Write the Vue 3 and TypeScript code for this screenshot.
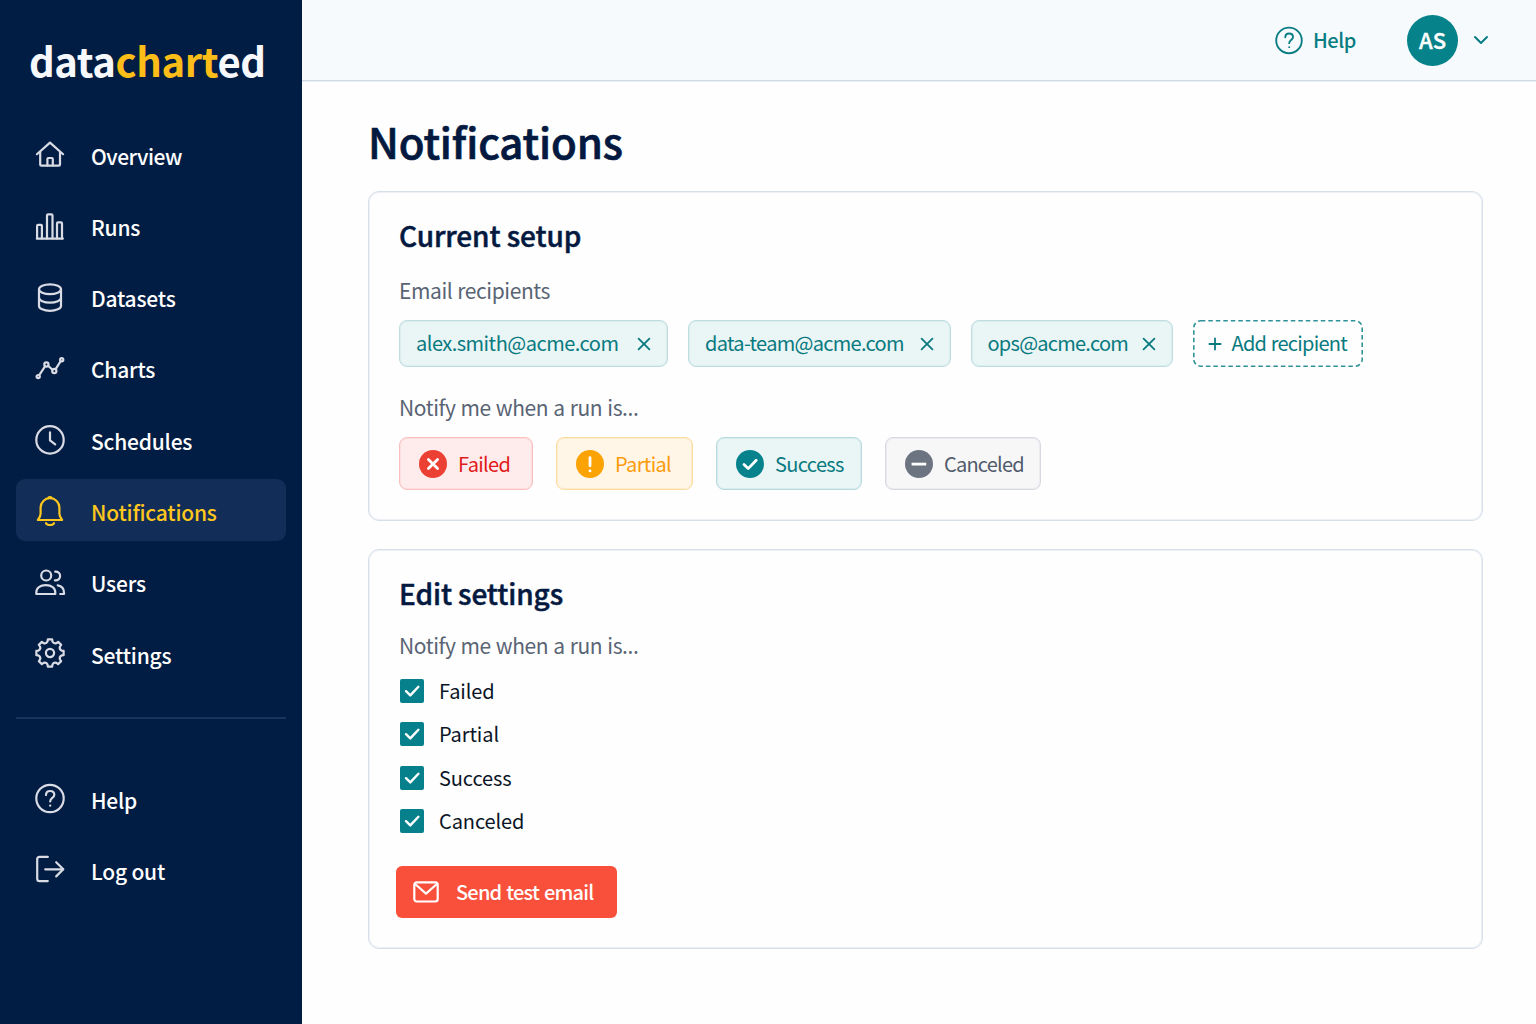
<script setup lang="ts">
type Status = 'failed' | 'partial' | 'success' | 'canceled'

interface NavItem {
  id: string
  label: string
}

const gearPath = (() => {
  const c = 15
  const points: string[] = []
  const at = (r: number, deg: number) => {
    const a = ((deg - 90) * Math.PI) / 180
    return `${(c + r * Math.cos(a)).toFixed(2)} ${(c + r * Math.sin(a)).toFixed(2)}`
  }
  for (let i = 0; i < 8; i++) {
    const d = i * 45
    points.push(`${i === 0 ? 'M' : 'L'}${at(13.8, d - 9)}`)
    points.push(`L${at(13.8, d + 9)}`)
    points.push(`L${at(11.8, d + 12)}`)
    points.push(`Q${at(9.8, d + 22.5)} ${at(11.8, d + 33)}`)
  }
  return points.join(' ') + ' Z'
})()

const questionPath =
  'M11 12.1 C11 9.5 12.8 8 15.1 8 C17.5 8 19.3 9.5 19.3 11.7 C19.3 14.9 15.2 15 15.2 18.4'

const icons: Record<string, string[]> = {
  overview: ['M1.9 15.2 L15 3.6 L28.1 15.2', 'M5.2 13 V25.6 Q5.2 26.7 6.3 26.7 H23.9 Q25 26.7 25 25.6 V13', 'M12.4 26.5 V20 Q12.4 19 13.4 19 H16.8 Q17.8 19 17.8 20 V26.5'],
  runs: ['M1.8 28.6 H27.9', 'M2.1 28.5 V15.8 Q2.1 14.8 3.1 14.8 H5.9 Q6.9 14.8 6.9 15.8 V28.5', 'M12 28.5 V5.6 Q12 4.4 13.2 4.4 H16.3 Q17.5 4.4 17.5 5.6 V28.5', 'M22 28.5 V13.4 Q22 12.4 23 12.4 H26 Q27 12.4 27 13.4 V28.5'],
  datasets: ['M4 7.3 A11 4.9 0 0 1 26 7.3 A11 4.9 0 0 1 4 7.3 Z', 'M4 7.3 V23.9 A11 4.9 0 0 0 26 23.9 V7.3', 'M4 15.8 A11 4.9 0 0 0 26 15.8'],
  charts: ['M4.4 21.8 L10.2 13.2', 'M13.1 12.8 L17.5 16.7', 'M20.5 16.3 L25.5 8.4', 'M1.6 23.6 a1.6 1.6 0 1 0 3.2 0 a1.6 1.6 0 1 0 -3.2 0', 'M9.3 11.5 a2.1 2.1 0 1 0 4.2 0 a2.1 2.1 0 1 0 -4.2 0', 'M17.2 18 a2.1 2.1 0 1 0 4.2 0 a2.1 2.1 0 1 0 -4.2 0', 'M25.1 6.8 a1.6 1.6 0 1 0 3.2 0 a1.6 1.6 0 1 0 -3.2 0'],
  schedules: ['M1.3 15.9 a13.7 13.7 0 1 0 27.4 0 a13.7 13.7 0 1 0 -27.4 0', 'M15 8.4 V16.4 L20.2 20.3'],
  notifications: ['M2.9 25 H27.1 C25.6 23 24.4 21.4 24.4 18.8 V12.6 A9.4 9.4 0 0 0 5.6 12.6 V18.8 C5.6 21.4 4.4 23 2.9 25 Z', 'M13.6 2.6 C14 1.9 16 1.9 16.4 2.6', 'M11 28.2 C12.2 30.6 17.8 30.6 19 28.2'],
  users: ['M6.2 8.5 a5 5 0 1 0 10 0 a5 5 0 1 0 -10 0', 'M1.3 27 V25.8 C1.3 20.8 5.2 18.1 10.8 18.1 C16.4 18.1 20.3 20.8 20.3 25.8 V27 Z', 'M20.2 4.6 C23.2 4.4 25.1 6.3 25.1 9 C25.1 11.8 23 13.7 19.9 13.4', 'M22.7 18.3 C26.6 19 29 21.6 29 25.6 V27 H25.2'],
  settings: [gearPath, 'M10.9 15 a4.1 4.1 0 1 0 8.2 0 a4.1 4.1 0 1 0 -8.2 0'],
  help: ['M1.3 15.5 a13.7 13.7 0 1 0 27.4 0 a13.7 13.7 0 1 0 -27.4 0', questionPath, 'M15.2 22.6 V22.7'],
  logout: ['M12.8 2.9 H4.6 Q2.2 2.9 2.2 5.3 V24.7 Q2.2 27.1 4.6 27.1 H12.8', 'M10.2 15.3 H28', 'M21.2 8.2 L28.3 15.3 L21.2 22.4'],
}

const mainNav: NavItem[] = [
  { id: 'overview', label: 'Overview' },
  { id: 'runs', label: 'Runs' },
  { id: 'datasets', label: 'Datasets' },
  { id: 'charts', label: 'Charts' },
  { id: 'schedules', label: 'Schedules' },
  { id: 'notifications', label: 'Notifications' },
  { id: 'users', label: 'Users' },
  { id: 'settings', label: 'Settings' },
]

const footNav: NavItem[] = [
  { id: 'help', label: 'Help' },
  { id: 'logout', label: 'Log out' },
]

const activeId = 'notifications'

const recipients = [
  { size: 'wide', email: 'alex.smith@acme.com' },
  { size: 'medium', email: 'data-team@acme.com' },
  { size: 'small', email: 'ops@acme.com' },
]

const statuses: { id: Status; label: string; mark: string }[] = [
  { id: 'failed', label: 'Failed', mark: 'M9.4 9.4 L18.6 18.6 M18.6 9.4 L9.4 18.6' },
  { id: 'partial', label: 'Partial', mark: 'M14 7.6 V15.8 M14 20.8 V20.9' },
  { id: 'success', label: 'Success', mark: 'M8 14.4 L12.2 18.6 L20.2 10.2' },
  { id: 'canceled', label: 'Canceled', mark: 'M6.6 14.1 H21.2' },
]
</script>

<template>
  <div class="app">
    <aside class="sidebar">
      <div class="logo">data<span>chart</span>ed</div>
      <nav class="nav">
        <a v-for="item in mainNav" :key="item.id" class="nav-item" :class="[item.id, { active: item.id === activeId }]">
          <svg class="nav-icon" viewBox="0 0 30 30"><path v-for="d in icons[item.id]" :key="d" :d="d" /></svg>
          <span>{{ item.label }}</span>
        </a>
      </nav>
      <div class="divider"></div>
      <nav class="nav">
        <a v-for="item in footNav" :key="item.id" class="nav-item">
          <svg class="nav-icon" viewBox="0 0 30 30"><path v-for="d in icons[item.id]" :key="d" :d="d" /></svg>
          <span>{{ item.label }}</span>
        </a>
      </nav>
    </aside>

    <div class="page">
      <header class="topbar">
        <a class="top-help">
          <svg viewBox="0 0 30 30"><path v-for="d in icons.help" :key="d" :d="d" /></svg>
          <span>Help</span>
        </a>
        <div class="avatar">AS</div>
        <svg class="chevron" viewBox="0 0 16 10"><path d="M2 2 L8 8 L14 2" /></svg>
      </header>

      <main class="content">
        <h1>Notifications</h1>

        <section class="card current">
          <h2>Current setup</h2>
          <p class="label">Email recipients</p>
          <div class="chips">
            <div v-for="r in recipients" :key="r.email" class="chip" :class="r.size">
              <span>{{ r.email }}</span>
              <svg viewBox="0 0 14 14"><path d="M1.6 1.6 L12.4 12.4 M12.4 1.6 L1.6 12.4" /></svg>
            </div>
            <button class="add">
              <svg class="dash" width="170" height="47"><rect x="0.8" y="0.8" width="168.4" height="45.4" rx="7" /></svg>
              <svg class="plus" viewBox="0 0 14 14"><path d="M7 1.4 V12.6 M1.4 7 H12.6" /></svg>
              <span>Add recipient</span>
            </button>
          </div>
          <p class="label second">Notify me when a run is...</p>
          <div class="statuses">
            <div v-for="s in statuses" :key="s.id" class="status" :class="s.id">
              <svg viewBox="0 0 28 28"><circle cx="14" cy="14" r="14" /><path :d="s.mark" /></svg>
              <span>{{ s.label }}</span>
            </div>
          </div>
        </section>

        <section class="card edit">
          <h2>Edit settings</h2>
          <p class="label">Notify me when a run is...</p>
          <div class="checks">
            <label v-for="s in statuses" :key="s.id" class="check">
              <svg viewBox="0 0 24 24"><rect width="24" height="24" rx="2" /><path d="M6 12.2 L10.3 16.4 L18.4 7.8" /></svg>
              <span>{{ s.label }}</span>
            </label>
          </div>
          <button class="send">
            <svg viewBox="0 0 26 22"><rect x="1.3" y="1.3" width="23.4" height="19.2" rx="2.4" /><path d="M2.4 3.2 L13 12.6 L23.6 3.2" /></svg>
            <span>Send test email</span>
          </button>
        </section>
      </main>
    </div>
  </div>
</template>

<style>
body {
  margin: 0;
}
</style>

<style scoped>
.app {
  display: flex;
  width: 1536px;
  height: 1024px;
  overflow: hidden;
  background: #fefefe;
  font-family: "Noto Sans CJK SC", "Noto Sans", sans-serif;
}
svg {
  flex: none;
  fill: none;
  stroke: currentColor;
  stroke-width: 2;
  stroke-linecap: round;
  stroke-linejoin: round;
  overflow: visible;
}
h1,
h2,
p {
  margin: 0;
}
button {
  border: 0;
  background: none;
  font: inherit;
}

.sidebar {
  flex: none;
  width: 302px;
  box-sizing: border-box;
  padding: 0 16px;
  background: #021d43;
  color: #fff;
}
.logo {
  height: 58px;
  padding: 31px 0 0 13px;
  margin-bottom: 34px;
  font-size: 40px;
  line-height: 58px;
  font-weight: 700;
  letter-spacing: -0.4px;
  color: #f7f8fc;
}
.logo span {
  color: #fdbd18;
}
.nav {
  display: flex;
  flex-direction: column;
  gap: 9.3px;
}
.nav-item {
  display: flex;
  align-items: center;
  gap: 26px;
  height: 62px;
  padding-left: 19px;
  border-radius: 9px;
  font-size: 21px;
  line-height: 30px;
  font-weight: 500;
  letter-spacing: -0.2px;
}
.nav-item span {
  padding-top: 3px;
}
.nav-item.overview {
  letter-spacing: -0.5px;
}
.nav-item.active {
  background: #122d57;
  color: #fdc71d;
}
.nav-icon {
  width: 30px;
  height: 30px;
  stroke-width: 2.2;
  color: #d9dbe5;
}
.active .nav-icon {
  color: #fdc71d;
}
.divider {
  height: 2px;
  margin: 33px 0 48px;
  background: #18335c;
}

.page {
  flex: 1;
  min-width: 0;
}
.topbar {
  display: flex;
  align-items: center;
  justify-content: flex-end;
  box-sizing: border-box;
  height: 81px;
  padding-right: 47px;
  border-bottom: 1px solid #cfdae7;
  box-shadow: 0 1px 0 #eaeff5;
  background: #f7fafc;
  color: #087d83;
}
.top-help {
  display: flex;
  align-items: center;
  gap: 10px;
  font-size: 20px;
  font-weight: 500;
  line-height: 30px;
  letter-spacing: -0.4px;
}
.top-help svg {
  width: 28px;
  height: 28px;
}
.avatar {
  width: 51px;
  height: 51px;
  margin: 1px 15px 0 51px;
  border-radius: 50%;
  background: #06828a;
  color: #fff;
  font-size: 22px;
  line-height: 48px;
  font-weight: 500;
  text-align: center;
  -webkit-text-stroke: 0.4px #fff;
}
.chevron {
  width: 16px;
  height: 10px;
}

.content {
  padding: 35px 53px 0 66px;
}
h1 {
  margin-bottom: 25px;
  font-size: 42px;
  line-height: 50px;
  font-weight: 500;
  letter-spacing: -0.15px;
  color: #04193f;
  -webkit-text-stroke: 0.7px #04193f;
}
.card {
  box-sizing: border-box;
  border: 1px solid #d6dfea;
  box-shadow: inset 0 0 0 1px #edf1f6;
  border-radius: 11px;
  padding-left: 30px;
}
.current {
  height: 330px;
  margin-bottom: 28px;
  padding-top: 27px;
}
.edit {
  height: 400px;
  padding-top: 27px;
}
h2 {
  font-size: 28px;
  line-height: 32px;
  font-weight: 500;
  letter-spacing: -0.1px;
  color: #04193f;
  -webkit-text-stroke: 0.5px #04193f;
}
.label {
  margin-top: 25px;
  font-size: 21px;
  line-height: 28px;
  letter-spacing: -0.42px;
  word-spacing: 0.8px;
  color: #596474;
}
.label.second {
  margin-top: 26px;
}
.edit .label {
  margin-top: 22px;
}
.chips {
  display: flex;
  gap: 20px;
  margin-top: 16px;
}
.chip {
  display: flex;
  align-items: center;
  justify-content: space-between;
  box-sizing: border-box;
  height: 47px;
  padding: 0 16px;
  border: 1px solid #bddde1;
  box-shadow: inset 0 0 0 1px #dbedef;
  border-radius: 8px;
  background: #eaf5f6;
  color: #087a80;
  font-size: 20px;
  line-height: 28px;
  letter-spacing: -0.5px;
}
.chip span,
.add span {
  margin-top: -2px;
}
.chip.wide {
  width: 269px;
}
.chip.medium {
  width: 262.5px;
  letter-spacing: -0.7px;
}
.chip.small {
  width: 202px;
  letter-spacing: -0.75px;
}
.chip svg {
  width: 14px;
  height: 14px;
  stroke-width: 1.8;
}
.add {
  position: relative;
  display: flex;
  align-items: center;
  gap: 10px;
  width: 170px;
  height: 47px;
  padding: 0 0 0 15px;
  color: #087a80;
  font-size: 20px;
  line-height: 28px;
  letter-spacing: -0.75px;
  word-spacing: 0.8px;
  white-space: nowrap;
}
.dash {
  position: absolute;
  left: 0;
  top: 0;
  stroke: #2f9298;
  stroke-width: 1.6;
  stroke-dasharray: 4.5 3;
  stroke-linecap: butt;
}
.plus {
  width: 14px;
  height: 14px;
  stroke-width: 1.8;
}
.statuses {
  display: flex;
  gap: 23px;
  margin-top: 16px;
}
.status {
  display: flex;
  align-items: center;
  gap: 11.5px;
  box-sizing: border-box;
  height: 53px;
  padding-left: 18.5px;
  border: 1px solid;
  border-radius: 8px;
  font-size: 20px;
  line-height: 28px;
  letter-spacing: -0.65px;
}
.status svg {
  width: 28px;
  height: 28px;
}
.status path {
  stroke: #fff;
  stroke-width: 2.8;
}
.status circle {
  fill: currentColor;
  stroke: none;
}
.failed.status {
  width: 134px;
  border-color: #fabfbf;
  box-shadow: inset 0 0 0 1px #fddddd;
  background: #feecec;
  color: #e21a1a;
}
.failed svg {
  color: #ec4035;
}
.partial.status {
  width: 137px;
  border-color: #fddca0;
  box-shadow: inset 0 0 0 1px #feedcd;
  background: #fff6e8;
  color: #fb9c0c;
}
.partial svg {
  color: #fba305;
}
.success.status {
  width: 146px;
  border-color: #b6dade;
  box-shadow: inset 0 0 0 1px #d8ecee;
  background: #eaf5f6;
  color: #087a80;
}
.success svg {
  color: #06828c;
}
.canceled.status {
  width: 156px;
  border-color: #d6d9e0;
  box-shadow: inset 0 0 0 1px #ebecef;
  background: #f7f7f8;
  color: #515b6b;
  letter-spacing: -0.8px;
}
.canceled svg {
  color: #6b7480;
}
.canceled path {
  stroke-linecap: butt;
}

.checks {
  display: flex;
  flex-direction: column;
  gap: 19.4px;
  margin-top: 20px;
}
.check {
  display: flex;
  align-items: center;
  gap: 15.5px;
  height: 24px;
  padding-left: 0.5px;
  color: #0b1526;
  font-size: 20px;
  line-height: 24px;
  letter-spacing: -0.1px;
}
.check svg {
  width: 24px;
  height: 24px;
}
.check rect {
  fill: #06808a;
  stroke: none;
}
.check path {
  stroke: #fff;
  stroke-width: 2.4;
}
.send {
  display: flex;
  align-items: center;
  gap: 17px;
  width: 221px;
  height: 52px;
  margin: 33px 0 0 -3px;
  padding: 0 0 0 17px;
  border-radius: 6px;
  background: #f9503c;
  color: #fff;
  font-size: 20px;
  font-weight: 500;
  line-height: 28px;
  letter-spacing: -0.8px;
  word-spacing: 1.2px;
  white-space: nowrap;
}
.send svg {
  width: 26px;
  height: 22px;
  stroke-width: 2.2;
}
</style>
